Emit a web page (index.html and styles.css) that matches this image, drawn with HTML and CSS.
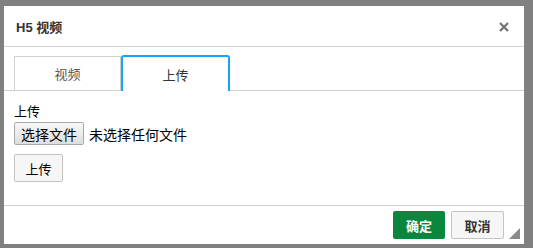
FILE: index.html
```html
<!DOCTYPE html>
<html lang="zh-CN">

<head>
  <meta charset="UTF-8">
  <title>H5 视频</title>
  <link rel="stylesheet" href="styles.css">
</head>

<body>

  <div class="dialog">
    <!-- 标题栏 -->
    <div class="dialog-header">
      <span class="dialog-title">H5 视频</span>
      <svg class="dialog-close" viewBox="0 0 10 10" width="10" height="10">
        <path d="M1 1 L9 9 M9 1 L1 9" stroke="#777" stroke-width="2.4" />
      </svg>
    </div>

    <!-- 选项卡 -->
    <div class="tabs">
      <div class="tab">视频</div>
      <div class="tab active">上传</div>
    </div>

    <div class="dialog-body">
      <div class="field-label">上传</div>
      <div class="file-row">
        <span class="file-btn">选择文件</span>
        <span class="file-name">未选择任何文件</span>
      </div>
      <span class="upload-btn">上传</span>
    </div>

    <div class="dialog-footer">
      <span class="btn btn-ok">确定</span>
      <span class="btn btn-cancel">取消</span>
      <span class="resize-grip"></span>
    </div>
  </div>

</body>

</html>
```

FILE: styles.css
```css
body {
  margin: 0;
  padding: 6px 0 0 4px;
  background: #808080;
  font-family: "Liberation Sans", "Noto Sans CJK SC", sans-serif;
  font-size: 13px;
  color: #333;
}

.dialog {
  width: 520px;
  height: 238px;
  background: #fff;
  display: flex;
  flex-direction: column;
}

.dialog-header {
  height: 40px;
  border-bottom: 1px solid #d1d1d1;
  display: flex;
  align-items: center;
  justify-content: space-between;
  padding: 0 15px 0 12px;
}

.dialog-title {
  font-size: 13px;
  font-weight: bold;
  color: #333;
}

.dialog-close {
  display: block;
  margin-top: 1px;
}

.tabs {
  display: flex;
  padding: 9px 10px 0;
  border-bottom: 1px solid #d1d1d1;
}

.tab {
  width: 105px;
  height: 33px;
  border: 1px solid #d1d1d1;
  border-bottom: none;
  display: flex;
  align-items: center;
  justify-content: center;
  font-size: 13px;
  color: #555;
}

.tab.active {
  border: 2px solid #19a3f5;
  border-bottom: none;
  border-radius: 3px 3px 0 0;
  height: 34px;
  margin-top: -1px;
  margin-bottom: -1px;
  background: #fff;
  color: #333;
}

.dialog-body {
  flex: 1;
  padding: 12px 10px 0;
  color: #000;
}

.field-label {
  line-height: 18px;
}

.file-row {
  display: flex;
  align-items: center;
  gap: 5px;
  margin-top: 1px;
}

.file-btn {
  height: 21px;
  padding: 0 6px;
  border: 1px solid #a9a9a9;
  border-radius: 2px;
  background: linear-gradient(#f8f8f8, #dddddd);
  display: flex;
  align-items: center;
  font-size: 14px;
}

.file-name {
  font-size: 14px;
}

.upload-btn {
  display: flex;
  align-items: center;
  justify-content: center;
  width: 47px;
  height: 26px;
  margin-top: 9px;
  border: 1px solid #c4c4c4;
  border-radius: 2px;
  background: #f6f6f6;
  font-size: 13px;
}

.dialog-footer {
  height: 33px;
  border-top: 1px solid #d1d1d1;
  display: flex;
  align-items: flex-start;
  justify-content: flex-end;
  gap: 6px;
  padding: 5px 20px 0 0;
  position: relative;
}

.btn {
  height: 26px;
  display: flex;
  align-items: center;
  justify-content: center;
  border-radius: 2px;
  font-size: 13px;
  font-weight: bold;
}

.btn-ok {
  width: 52px;
  height: 28px;
  background: #0a873d;
  color: #fff;
}

.btn-cancel {
  width: 51px;
  border: 1px solid #c4c4c4;
  background: #f6f6f6;
  color: #333;
}

.resize-grip {
  position: absolute;
  right: 4px;
  bottom: 5px;
  width: 0;
  height: 0;
  border-left: 11px solid transparent;
  border-bottom: 11px solid #8a8a8a;
}
```
